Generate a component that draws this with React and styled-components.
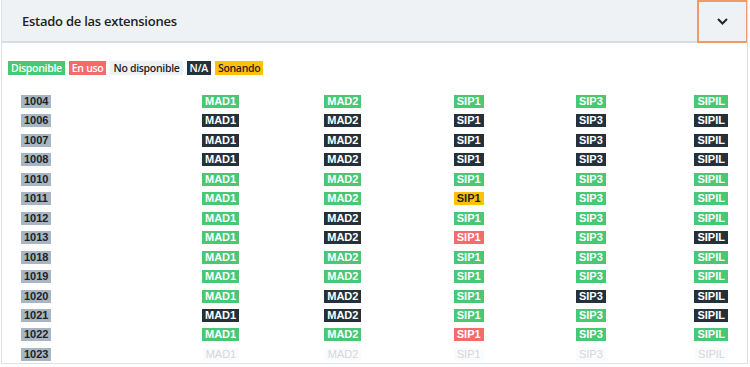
import React from "react";
import styled, { createGlobalStyle } from "styled-components";

const GlobalStyle = createGlobalStyle`
  body {
    margin: 0;
    background: #fff;
    font-family: "Open Sans", "Liberation Sans", sans-serif;
  }
`;

const COLORS = {
  g: { bg: "#48c774", fg: "#fff" },
  d: { bg: "#25313a", fg: "#fff" },
  r: { bg: "#f46b6b", fg: "#fff" },
  y: { bg: "#ffc107", fg: "#1f1f1f" },
  l: { bg: "#eef1f4", fg: "#222" },
  o: { bg: "#fafbfc", fg: "#d4d7da" },
};

const Card = styled.div`
  margin-left: 1px;
  width: 747px;
  height: 364px;
  box-sizing: border-box;
  border: 1px solid #dde2e6;
  border-top: 0;
  background: #fff;
  overflow: hidden;
`;

const Header = styled.div`
  display: flex;
  align-items: stretch;
  height: 43px;
  box-sizing: border-box;
  background: #eff2f5;
  border-bottom: 2px solid #d8dfe4;
`;

const Title = styled.h3`
  flex: 1;
  margin: 0;
  padding: 0 0 0 20px;
  display: flex;
  align-items: center;
  font-size: 13px;
  font-weight: 600;
  letter-spacing: -0.25px;
  color: #222;
`;

const Toggle = styled.button`
  width: 51px;
  margin: 0 -1px -2px 0;
  border: 2px solid #f39a62;
  background: #eff2f5;
  display: flex;
  align-items: center;
  justify-content: center;
  padding: 0;
`;

const Body = styled.div`
  padding: 18px 19px 0 6px;
`;

const Legend = styled.div`
  display: flex;
  gap: 4px;
  margin-bottom: 20px;
`;

const LegendTag = styled.span`
  height: 14px;
  padding: 0 3px;
  font-size: 10.5px;
  font-weight: 600;
  line-height: 14px;
  letter-spacing: -0.3px;
  background: ${(p) => COLORS[p.$c].bg};
  color: ${(p) => COLORS[p.$c].fg};
`;

const Grid = styled.div`
  display: grid;
  grid-template-columns: 96px repeat(5, 1fr);
  row-gap: 6.46px;
  padding-left: 13px;
`;

const Num = styled.span`
  justify-self: start;
  height: 13px;
  padding: 0 3px;
  font-family: "Liberation Sans", Arial, sans-serif;
  font-size: 11px;
  font-weight: 700;
  line-height: 13px;
  background: #a7b6c2;
  color: #1e2327;
`;

const Tag = styled.span`
  justify-self: end;
  height: 13px;
  padding: 0 3px;
  font-family: "Liberation Sans", Arial, sans-serif;
  font-size: 11px;
  font-weight: ${(p) => (p.$c === "o" ? 400 : 700)};
  line-height: 13px;
  background: ${(p) => COLORS[p.$c].bg};
  color: ${(p) => COLORS[p.$c].fg};
`;

const LINES = ["MAD1", "MAD2", "SIP1", "SIP3", "SIPIL"];

const rows = [
  ["1004", "ggggg"],
  ["1006", "ddddd"],
  ["1007", "ddddd"],
  ["1008", "ddddd"],
  ["1010", "ggggg"],
  ["1011", "ggygg"],
  ["1012", "gdggg"],
  ["1013", "gdrgd"],
  ["1018", "ggggg"],
  ["1019", "ggggg"],
  ["1020", "gdgdd"],
  ["1021", "ddggd"],
  ["1022", "ggrgg"],
  ["1023", "ooooo"],
];

const legend = [
  ["g", "Disponible"],
  ["r", "En uso"],
  ["l", "No disponible"],
  ["d", "N/A"],
  ["y", "Sonando"],
];

const Chevron = () => (
  <svg width="11" height="7" viewBox="0 0 11 7">
    <path d="M1 1l4.5 4.5L10 1" fill="none" stroke="#1f262b" strokeWidth="2" />
  </svg>
);

export default function App() {
  return (
    <>
      <GlobalStyle />
      <Card>
        <Header>
          <Title>Estado de las extensiones</Title>
          <Toggle>
            <Chevron />
          </Toggle>
        </Header>
        <Body>
          <Legend>
            {legend.map(([c, t]) => (
              <LegendTag key={t} $c={c}>
                {t}
              </LegendTag>
            ))}
          </Legend>
          <Grid>
            {rows.map(([num, states]) => (
              <React.Fragment key={num}>
                <Num>{num}</Num>
                {LINES.map((l, i) => (
                  <Tag key={l} $c={states[i]}>
                    {l}
                  </Tag>
                ))}
              </React.Fragment>
            ))}
          </Grid>
        </Body>
      </Card>
    </>
  );
}
